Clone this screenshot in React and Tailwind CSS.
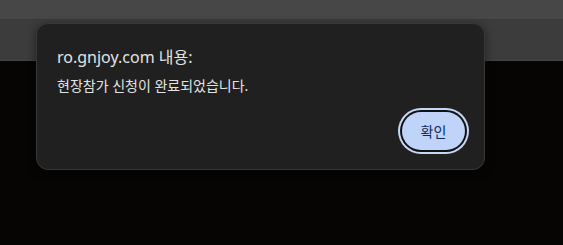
import React from "react";

export default function App() {
  return (
    <div className="relative w-[563px] h-[245px] overflow-hidden bg-[#070504] font-['Noto_Sans','Noto_Sans_CJK_KR',sans-serif]">
      <div className="h-[20px] bg-[#474747] border-b border-[#3a3a3a]" />
      <div className="h-[41px] bg-[#3c3c3c] border-b border-[#444]" />

      <div className="absolute left-[36px] top-[23px] w-[449px] h-[147px] rounded-[12px] bg-[#202020] border border-[#383838] shadow-[0_2px_8px_rgba(0,0,0,0.5)] pl-[20px] pr-[15px] pt-[21px] pb-[15px] flex flex-col">
        <p className="text-[16px] leading-[24px] text-[#e3e3e3]">ro.gnjoy.com 내용:</p>
        <p className="mt-[7px] text-[14px] leading-[20px] text-[#e3e3e3]">현장참가 신청이 완료되었습니다.</p>
        <div className="mt-auto flex justify-end">
          <button className="w-[63px] h-[38px] rounded-full bg-[#bfd4f8] text-[14px] text-[#0b2a5c] shadow-[0_0_0_2px_#121212,0_0_0_4px_#c6d7f4] mr-[4px] mb-[4px]">
            확인
          </button>
        </div>
      </div>
    </div>
  );
}
